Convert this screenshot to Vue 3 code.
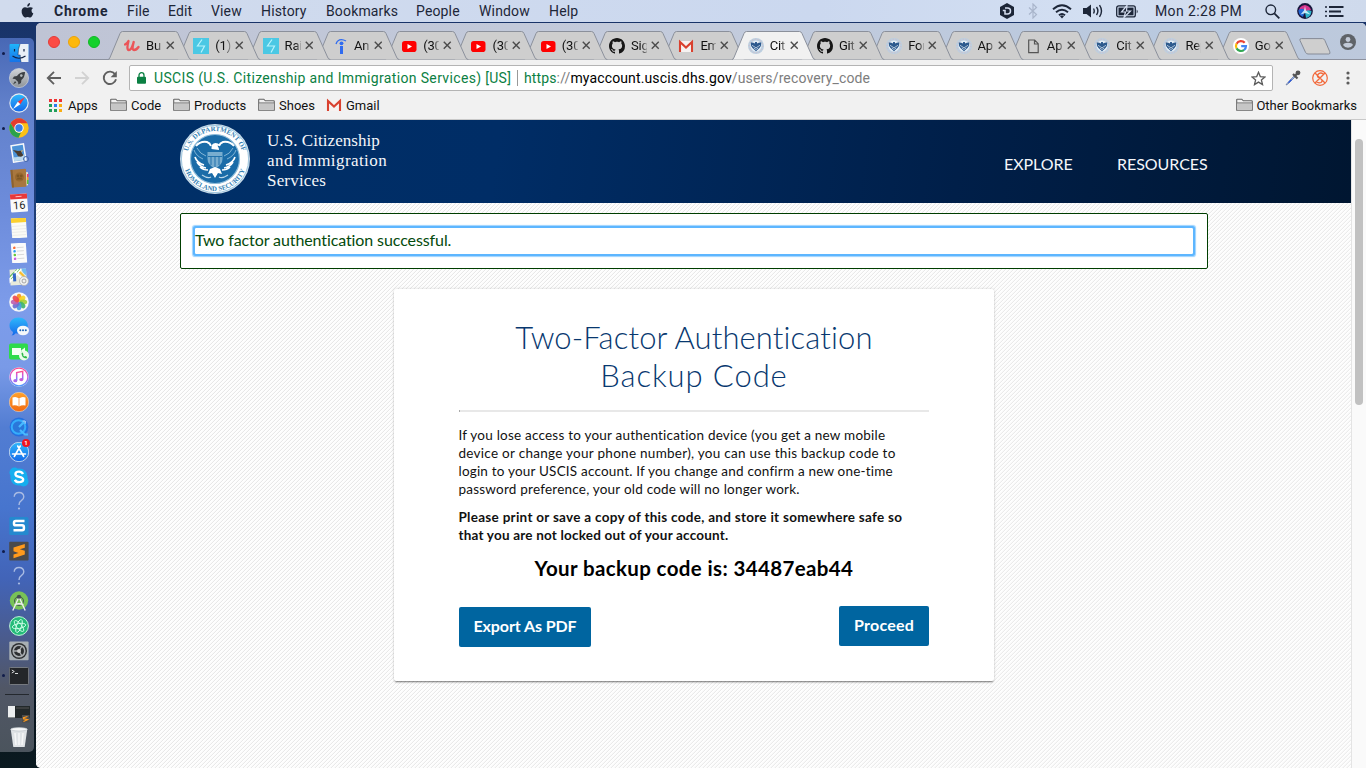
<script setup>
const menus = [
  { t: 'Chrome', w: 73 }, { t: 'File', w: 41 }, { t: 'Edit', w: 43 }, { t: 'View', w: 50 },
  { t: 'History', w: 65 }, { t: 'Bookmarks', w: 90 }, { t: 'People', w: 63 }, { t: 'Window', w: 70 }, { t: 'Help', w: 40 },
]
const tabs = [
  ['udemy', 'Bu'], ['bolt', '(1)'], ['bolt', 'Rai'], ['indeed', 'An'], ['youtube', '(30'], ['youtube', '(30'],
  ['youtube', '(30'], ['github', 'Sig'], ['gmail', 'Em'], ['eagle', 'Citi'], ['github', 'Git'], ['eagle', 'For'],
  ['eagle', 'Ap'], ['page', 'Ap'], ['eagle', 'Citi'], ['eagle', 'Rep'], ['google', 'Go'],
].map(([icon, text], i) => ({ icon, text, active: i === 9, z: i === 9 ? 40 : 30 - i }))
const dock = [
  'finder', 'rocket', 'safari', 'chrome', 'mail', 'contacts', 'calendar', 'notes', 'reminders', 'maps', 'photos',
  'messages', 'facetime', 'itunes', 'ibooks', 'quicktime', 'appstore', 'skype', 'question', 'snagit', 'sublime',
  'question', 'studio', 'atom', 'settings', 'terminal',
]
const running = ['finder', 'chrome', 'sublime', 'terminal']
const petals = [
  ['#f7931e', 0], ['#f9d423', 45], ['#a4cf3a', 90], ['#3fb56f', 135],
  ['#4a9fe0', 180], ['#6f6fd0', 225], ['#c062b0', 270], ['#ef4b50', 315],
]
</script>

<template>
  <div class="screen">
    <svg class="defs" width="0" height="0" aria-hidden="true">
      <defs>
        <linearGradient id="gFinder" x2="0" y2="1"><stop stop-color="#1fb4fb" /><stop offset="1" stop-color="#1673e8" /></linearGradient>
        <linearGradient id="gBlue" x2="0" y2="1"><stop stop-color="#2fb8fb" /><stop offset="1" stop-color="#1469ea" /></linearGradient>
        <linearGradient id="gSilver" x2="0" y2="1"><stop stop-color="#d2d5d8" /><stop offset="1" stop-color="#8e9499" /></linearGradient>
        <linearGradient id="gPink" x2="0" y2="1"><stop stop-color="#ff4f8e" /><stop offset=".5" stop-color="#c65be8" /><stop offset="1" stop-color="#4b9bff" /></linearGradient>
        <linearGradient id="gOrange" x2="0" y2="1"><stop stop-color="#ffa22b" /><stop offset="1" stop-color="#f26a12" /></linearGradient>
        <radialGradient id="gSiri"><stop stop-color="#e6f7ff" /><stop offset=".35" stop-color="#3fa9f5" /><stop offset=".65" stop-color="#6e2f9e" /><stop offset="1" stop-color="#18143c" /></radialGradient>
      </defs>

      <symbol id="udemy" viewBox="0 0 16 16"><path d="M1 6.500C3 5.500 4 4 4.500 3 3.500 7 2.500 12 5 12s3.700-4.500 4.700-8C8.700 8 7.700 12 10 12c2 0 3.500-1.500 4.500-3" fill="none" stroke="#eb5558" stroke-width="2.300" stroke-linecap="round" stroke-linejoin="round" /></symbol>
      <symbol id="bolt" viewBox="0 0 16 16"><path fill="#4bc8e4" d="M0 0h16v16H0z" /><path d="M9 1.500 4.500 8h7L8 14.500" fill="none" stroke="#b9f3fc" stroke-width="1.200" /></symbol>
      <symbol id="indeed" viewBox="0 0 16 16"><path d="M4 6c1-4 5-6 10-3" fill="none" stroke="#2f6bf0" stroke-width="1.300" /><circle cx="9.500" cy="5.300" r="1.900" fill="#2f6bf0" /><path d="M8 8h3v8H8z" fill="#2f6bf0" /></symbol>
      <symbol id="youtube" viewBox="0 0 16 16"><rect x="1" y="3" width="14.500" height="11" rx="2.800" fill="#f00" /><path d="m6.500 6 4.500 2.500-4.500 2.500z" fill="#fff" /></symbol>
      <symbol id="github" viewBox="0 0 16 16"><path fill="#161616" d="M8 0C3.580 0 0 3.580 0 8c0 3.540 2.290 6.530 5.470 7.590.4.070.550-.170.550-.380 0-.190-.010-.820-.010-1.490-2.010.370-2.530-.490-2.690-.940-.090-.230-.480-.940-.820-1.130-.280-.150-.680-.520-.010-.530.630-.010 1.080.580 1.230.820.720 1.210 1.870.870 2.330.660.070-.520.280-.870.510-1.070-1.780-.200-3.640-.890-3.640-3.950 0-.870.310-1.590.820-2.150-.080-.200-.360-1.020.080-2.120 0 0 .670-.210 2.200.820.640-.180 1.320-.270 2-.270s1.360.090 2 .270c1.530-1.040 2.200-.820 2.200-.820.440 1.100.160 1.920.080 2.120.510.560.820 1.270.820 2.150 0 3.070-1.870 3.750-3.650 3.950.290.250.540.730.540 1.480 0 1.070-.010 1.930-.010 2.200 0 .210.150.460.550.380A8.010 8.010 0 0 0 16 8c0-4.420-3.580-8-8-8" /></symbol>
      <symbol id="gmail" viewBox="0 0 16 16"><path fill="#f6f2f1" d="M1 3h14v11H1z" /><path d="M2 14V4l6 5.500L14 4v10" fill="none" stroke="#d9412f" stroke-width="2.100" /></symbol>
      <symbol id="eagle" viewBox="0 0 16 16"><circle cx="8" cy="8" r="8" fill="#bccfe0" /><circle cx="8" cy="8" r="6.700" fill="none" stroke="#e3b3ba" stroke-dasharray="1 2" stroke-width=".7" /><circle cx="8" cy="8" r="5.500" fill="#e4edf5" /><path fill="#2d5a8e" d="M2.800 4.500Q5 4 6.700 5.500L7.200 4h1.600l.5 1.500Q11 4 13.200 4.500 13.500 8 11.500 10L8 13.300 4.500 10Q2.500 8 2.800 4.500" /><path stroke="#c9d9e8" stroke-width=".8" fill="none" d="M4 7.300 8 9.800l4-2.500M5.800 10 8 11.500l2.200-1.500" /></symbol>
      <symbol id="page" viewBox="0 0 16 16"><path d="M3.700 2h6l3.500 3.700v9H3.700zM9.500 2v4h3.700" fill="none" stroke="#555" stroke-width="1.200" /></symbol>
      <symbol id="google" viewBox="0 0 16 16"><circle cx="8" cy="8" r="8" fill="#fff" /><g fill="none" stroke-width="2.200"><path d="M11.700 4.800A5 5 0 0 0 3.600 5.700" stroke="#ea4335" /><path d="M3.600 5.600a5 5 0 0 0 0 4.900" stroke="#fbbc05" /><path d="M3.600 10.400a5 5 0 0 0 7.500 1.500" stroke="#34a853" /><path d="M8.200 8.100h4.800a5 5 0 0 1-1.900 3.900" stroke="#4285f4" /></g></symbol>
      <symbol id="folder" viewBox="0 0 17 14"><path d="M.7 12.300V1.800q0-.6.600-.6h4.500l1.500 1.600h8.300q.7 0 .7.700v8.800z" fill="#f1f1f1" stroke="#666" stroke-width="1.100" /><path d="M1.300 5.300h14.400v6.500H1.300z" fill="#c6c6c6" /><path d="M1 4.900h15" stroke="#777" /></symbol>

      <symbol id="finder" viewBox="0 0 20 20"><rect x=".5" y="1" width="19" height="18" rx="1" fill="url(#gFinder)" /><path d="M11 1h8.500v18H12q-1-4-.8-7H9q0-6 2-11" fill="#e9eff7" /><path d="M5.500 6v2.500M15 6v2.500M3.500 13q6.500 4.500 13 0" stroke="#124" stroke-width="1.200" fill="none" /><path d="M11 1Q9 6 9 12h2.200q-.2 3 .8 7" fill="none" stroke="#124" stroke-width=".5" /></symbol>
      <symbol id="rocket" viewBox="0 0 20 20"><circle cx="10" cy="10" r="9.600" fill="url(#gSilver)" stroke="#dadde0" stroke-width=".6" /><path d="M16 4q-5-.2-8 4l-3 .4-1.500 2.400 2.600.2 3 3 .2 2.500L12 15l.4-3Q16 9 16 4M6 13l-2 3.500 3.300-2" fill="#3c4043" /><circle cx="12.300" cy="7.600" r="1.300" fill="#b5babd" /></symbol>
      <symbol id="safari" viewBox="0 0 20 20"><circle cx="10" cy="10" r="9.700" fill="#e8edf1" /><circle cx="10" cy="10" r="8.600" fill="url(#gBlue)" /><path d="m16 4-7.200 4.700 2.500 2.600z" fill="#f33" /><path d="m4 16 4.800-7.300 2.500 2.600z" fill="#fff" /></symbol>
      <symbol id="chrome" viewBox="0 0 20 20"><circle cx="10" cy="10" r="9.700" fill="#fbc116" /><path d="M1.600 5.200A9.700 9.700 0 0 1 18.400 5.200H10L6 12.300z" fill="#e33b2e" /><path d="M1.600 5.200 6 12.400q2 3.200 6 2l-2.500 5.300A9.700 9.700 0 0 1 1.600 5.200" fill="#2ba24c" /><circle cx="10" cy="10" r="4.700" fill="#fff" /><circle cx="10" cy="10" r="3.700" fill="#3a7fe8" /></symbol>
      <symbol id="mail" viewBox="0 0 20 20"><g transform="rotate(-9 10 10)"><path d="M2.500 1h14v18h-14z" fill="#f5f7fa" /><path d="M4 2.500h11v15H4z" fill="#4c92d7" /><path d="M4 13q5 2 11-1v5.500H4z" fill="#b9d8ee" /><path d="m4.500 6 5 2 4.500 0-1.500 2 1.500 3-2.500 1-3-1-1-3z" fill="#4a3b2d" /><path d="m12 8 2.500 0-1.500 1.500z" fill="#f4d896" /></g><circle cx="17" cy="16" r="2.500" fill="none" stroke="#4668aa" stroke-width="1" /></symbol>
      <symbol id="contacts" viewBox="0 0 20 20"><path d="m16 4 3 .3v13l-3 .5z" fill="#e9e3d2" /><path d="M18 6h1.500v3H18z" fill="#f36" /><path d="M18 9h1.500v3H18z" fill="#f9a21b" /><path d="M18 12h1.500v4H18z" fill="#5bc236" /><path d="M1.500 2 16 .8q1 0 1 1l.5 16q0 1-1 1L3 19.500z" fill="#a8773f" /><path d="m1.500 2 2-.2L5 19.400l-2 .1z" fill="#8d6230" /><circle cx="10.500" cy="9" r="4.500" fill="#99692f" /><circle cx="9" cy="8" r="1.400" fill="#7d5624" /><circle cx="12.300" cy="8" r="1.400" fill="#7d5624" /><path d="M7 11.500q3.500-4 7 0" fill="#7d5624" /></symbol>
      <symbol id="calendar" viewBox="0 0 20 20"><g transform="rotate(-4 10 10)"><rect x="1.500" y="1" width="17" height="18" rx="1" fill="#fafafa" /><path d="M1.500 1h17v5h-17z" fill="#e8383b" /><path d="M7 3.500h6" stroke="#fbb" stroke-width="1" /><text x="10" y="16" text-anchor="middle" font-family="Roboto, sans-serif" font-size="11" fill="#222">16</text></g></symbol>
      <symbol id="notes" viewBox="0 0 20 20"><g transform="rotate(-4 10 10)"><path d="M2.500 0h15v20h-15z" fill="#fbfaf5" /><path d="M2.500 0h15v4.500h-15z" fill="#fcd02f" /><path d="M3 8h14M3 11h14M3 14h14M3 17h14" stroke="#dedede" stroke-width=".5" /></g></symbol>
      <symbol id="reminders" viewBox="0 0 20 20"><g transform="rotate(-4 10 10)"><path d="M2.500 0h15v20h-15z" fill="#fbfbfb" /><circle cx="5.700" cy="4.500" r="1.300" fill="#f96b36" /><circle cx="5.700" cy="8" r="1.300" fill="#2d9cf1" /><circle cx="5.700" cy="11.700" r="1.300" fill="#65c937" /><circle cx="5.700" cy="15.500" r="1.300" fill="#d15be0" /><path d="M8 4.500h7M8 8h7M8 11.700h7M8 15.500h7" stroke="#ccc" stroke-width=".7" /></g></symbol>
      <symbol id="maps" viewBox="0 0 20 20"><g transform="rotate(-4 10 10)"><path d="M1 2h16.500v16H1z" fill="#e8eadb" /><path d="M1 8 8 2h5L1 13z" fill="#5fbf50" /><path d="M10 2 1 11v3L13 2M6 4l11 12" stroke="#fff" stroke-width="1.500" fill="none" /><path d="M13 2h4.500v7q-4-3-4.500-7" fill="#72bdf0" /><path d="M4 6h3v8H4z" fill="#3267c8" /><path d="m11 5 6 7" stroke="#f9bd2d" stroke-width="2" /></g><circle cx="15" cy="14" r="4.500" fill="#eef0f0" stroke="#aaa" stroke-width=".7" /><circle cx="15" cy="14" r="2" fill="none" stroke="#888" stroke-width=".7" /></symbol>
      <symbol id="photos" viewBox="0 0 20 20"><circle cx="10" cy="10" r="9.800" fill="#f7f7f7" /><ellipse v-for="p in petals" :key="p[1]" cx="10" cy="5.700" rx="2.500" ry="3.900" :fill="p[0]" fill-opacity=".92" :transform="`rotate(${p[1]} 10 10)`" /></symbol>
      <symbol id="messages" viewBox="0 0 20 20"><path d="M9.500.5c5 0 9.300 3.500 9.300 8s-4.300 8-9.300 8q-1.500 0-2.800-.3Q5 18.500 2.500 18.500q1.700-1.500 1.500-3.500-3.500-2.500-3.500-6.500C.5 4 4.500.5 9.500.5" fill="url(#gBlue)" /><ellipse cx="14" cy="13.500" rx="6" ry="4.800" fill="#f5f8fa" /><g fill="#1b63b5"><circle cx="11.300" cy="13.300" r="1" /><circle cx="14" cy="13.300" r="1" /><circle cx="16.800" cy="13.300" r="1" /></g></symbol>
      <symbol id="facetime" viewBox="0 0 20 20"><rect x="0" y="1.500" width="19" height="16" rx="2" fill="#2edb4b" /><path d="M3 6h9v7H3zM12 8.500 16 5.500v6z" fill="#f4fff4" /><circle cx="15" cy="13.500" r="5" fill="#eafbea" /><path d="M12.500 11q0 5 5 5.500l.8-1.500-2-1-1 .5-1.200-1.200.4-1-1-1.800z" fill="#2cb947" /></symbol>
      <symbol id="itunes" viewBox="0 0 20 20"><circle cx="10" cy="10" r="9.800" fill="#eee" /><circle cx="10" cy="10" r="8.900" fill="#fff" stroke="url(#gPink)" stroke-width="1.300" /><path d="M7.700 13.500v-8l6-1.200v8" fill="none" stroke="url(#gPink)" stroke-width="1.500" /><ellipse cx="6.300" cy="13.700" rx="2" ry="1.600" fill="#a96bec" /><ellipse cx="12.300" cy="12.600" rx="2" ry="1.600" fill="#c65bd8" /></symbol>
      <symbol id="ibooks" viewBox="0 0 20 20"><circle cx="10" cy="10" r="9.700" fill="url(#gOrange)" stroke="#f4d8bb" stroke-width=".6" /><path d="M10 6.500Q7 4 3.500 5.500v8Q7 12.500 10 14.500q3-2 6.500-1v-8Q13 4 10 6.500" fill="#fff" /><path d="M10 6.500v8" stroke="#f08020" stroke-width=".7" /></symbol>
      <symbol id="quicktime" viewBox="0 0 20 20"><circle cx="10" cy="10" r="9.400" fill="#246fdf" /><circle cx="9.500" cy="10" r="6.800" fill="#2a77da" stroke="#35adfb" stroke-width="2" /><path d="m10 10 5-5M11 13l5 4.500h3" stroke="#48b9ff" stroke-width="2.200" fill="none" /><path d="M13.500 4h2.700v2.700" stroke="#bfe6ff" fill="none" /></symbol>
      <symbol id="appstore" viewBox="0 0 20 20"><circle cx="10" cy="10" r="9.700" fill="url(#gBlue)" stroke="#d9e6f1" stroke-width=".8" /><path d="m11.300 4-6 10.500M8.700 4l6 10.500M3.500 12h13" stroke="#fff" stroke-width="1.600" stroke-linecap="round" /></symbol>
      <symbol id="skype" viewBox="0 0 20 20"><rect x="1.500" y="1.500" width="17" height="17" rx="8" fill="#14aeef" /><circle cx="5.500" cy="5.500" r="5" fill="#14aeef" /><circle cx="14.500" cy="14.500" r="5" fill="#14aeef" /><path d="M14 7q-1-2.300-4-2.300-3.600 0-3.600 2.500 0 2 3.800 2.600 4 .7 4 2.800 0 2.600-4 2.600-3.300 0-4.300-2.500" stroke="#fff" stroke-width="2.300" fill="none" /></symbol>
      <symbol id="question" viewBox="0 0 20 20"><path d="M5.200 5.800q.3-4.300 4.800-4.300t4.800 4.200q0 2.400-2.500 4Q10 11 10 14" fill="none" stroke="#a9bbe3" stroke-width="1.400" /><circle cx="10" cy="17.500" r="1.100" fill="#a9bbe3" /></symbol>
      <symbol id="snagit" viewBox="0 0 20 20"><rect x=".3" y="1" width="19.200" height="18" rx="1.500" fill="#2489cf" /><path d="M15.500 5H6.700Q5 5 5 6.700v1q0 1.600 1.700 1.600h6.500q1.700 0 1.700 1.700v1.600q0 1.700-1.700 1.700H4.500" fill="none" stroke="#fff" stroke-width="2.500" /></symbol>
      <symbol id="sublime" viewBox="0 0 20 20"><rect x=".2" y=".7" width="19.400" height="18.800" rx="1" fill="#4a4a4b" /><path d="M15.800 3 4.500 6.500v3.700l5 1.700-5 1.600v3.700l11.300-3.700V9.800l-5-1.600 5-1.500z" fill="#ff9a1c" /></symbol>
      <symbol id="studio" viewBox="0 0 20 20"><circle cx="10" cy="9.500" r="9.200" fill="#78c257" /><circle cx="10" cy="10" r="4.500" fill="none" stroke="#455" stroke-width="1" /><circle cx="10" cy="6" r="2.200" fill="#435055" /><path d="m9.300 7.500-5.500 12M10.700 7.500l5.500 12M5.500 14q4.500-2.500 9 0" fill="none" stroke="#eee" stroke-width="1.400" /></symbol>
      <symbol id="atom" viewBox="0 0 20 20"><circle cx="10" cy="10" r="9.400" fill="#24bb79" stroke="#bff5da" stroke-width="1" /><g fill="none" stroke="#d4ffec" stroke-width=".9"><ellipse cx="10" cy="10" rx="2.500" ry="6.800" transform="rotate(20 10 10)" /><ellipse cx="10" cy="10" rx="2.500" ry="6.800" transform="rotate(80 10 10)" /><ellipse cx="10" cy="10" rx="2.500" ry="6.800" transform="rotate(140 10 10)" /></g></symbol>
      <symbol id="settings" viewBox="0 0 20 20"><rect x=".3" y=".5" width="19.300" height="18.800" rx="1" fill="#a8afb4" /><circle cx="10" cy="10" r="8" fill="#2d2f31" /><circle cx="10" cy="10" r="5.800" fill="none" stroke="#a9adb0" stroke-width="1.600" /><path d="M10 10H4.500M10 10l3-5M10 10l3 5" stroke="#a9adb0" stroke-width="1.400" /><circle cx="10" cy="10" r="2" fill="#ccc" /></symbol>
      <symbol id="terminal" viewBox="0 0 20 20"><rect x=".3" y="1.500" width="19.300" height="17" rx="1" fill="#242629" stroke="#85898e" stroke-width=".8" /><path d="m2.800 4 2.500 1.500L2.800 7M6 7.500h3" fill="none" stroke="#eee" stroke-width=".9" /></symbol>
    </svg>

    <header class="menubar">
      <svg class="apple" viewBox="0 0 14 16"><path d="M9.700 0q.1 1.700-.9 2.800Q7.900 3.800 6.700 3.700q-.1-1.500.9-2.600Q8.500.1 9.700 0M12.900 5.400q-1.700 1-1.600 2.900.1 2.200 2 3-.5 1.500-1.500 2.900-1 1.400-2 1.400-.7 0-1.400-.4-1.300-.5-2.600 0-.7.400-1.300.4-1.200 0-2.600-2.300Q.3 10.500.7 8 1.300 4.700 4.300 4.500q.8 0 1.600.4 1.100.4 2.100 0 1-.4 2-.4 1.900.1 2.900.9" fill="#1d2638" /></svg>
      <nav class="menus"><span v-for="(m, i) in menus" :key="m.t" :class="{ bold: i === 0 }" :style="{ width: m.w + 'px' }">{{ m.t }}</span></nav>
      <div class="status">
        <svg class="s-hex" viewBox="0 0 14 16"><path d="M7 0 14 4v8l-7 4-7-4V4z" fill="#1c2537" /><path d="M5 5h2.500a3 3 0 0 1 0 6H5V7.500M2.800 7.500h3" fill="none" stroke="#d5def0" stroke-width="1.500" /></svg>
        <svg class="s-bt" viewBox="0 0 10 16"><path d="m1 4.500 7.500 7L5 15V1l3.500 3.500-7.500 7" fill="none" stroke="#a9b5cb" stroke-width="1.200" /></svg>
        <svg class="s-wifi" viewBox="0 0 20 15"><g fill="none" stroke="#1d2638" stroke-width="1.900"><path d="M1 5.200q9-8 18 0M4 8.300q6-5.200 12 0M7 11.300q3-2.600 6 0" /></g><path d="m8 12.300 2-1 2 1-2 2.300z" fill="#1d2638" /></svg>
        <svg class="s-vol" viewBox="0 0 21 16"><path d="M0 5h3.500L8 1.500v13L3.500 11H0z" fill="#1d2638" /><path d="M10.500 5.500q1.500 2.500 0 5M13.500 4q2.800 4 0 8M16.500 2.200q4 5.800 0 11.600" fill="none" stroke="#1d2638" stroke-width="1.400" /></svg>
        <svg class="s-bat" viewBox="0 0 23 13"><rect x=".7" y=".9" width="18.600" height="11" rx="2" fill="none" stroke="#1d2638" stroke-width="1.300" /><path d="M2.500 2.600h15v7.700h-15z" fill="#1d2638" /><path d="M20.700 4.500q2 2 0 4z" fill="#1d2638" /><path d="M11 .5 5.500 7h4L8 12.500 14.500 6h-4z" fill="#1d2638" stroke="#d5def0" stroke-width="1.200" /></svg>
        <span class="clock">Mon 2:28 PM</span>
        <svg class="s-find" viewBox="0 0 15 15"><circle cx="5.800" cy="5.800" r="4.800" fill="none" stroke="#1d2638" stroke-width="1.400" /><path d="m9.300 9.300 5 5" stroke="#1d2638" stroke-width="1.800" /></svg>
        <svg class="s-siri" viewBox="0 0 16 16"><circle cx="8" cy="8" r="7.900" fill="#17163c" /><path d="M2 8q0-5 6-6 5 1 6 5l-6 2z" fill="#d6338e" /><path d="M1.500 7q5-3 6.500 1l-2 6Q1 12 1.500 7" fill="#2468d8" /><path d="M14.500 8q-5-2-6.500 1l1 6q5-1 5.500-7" fill="#2fb3c9" /><path d="m8 3 1 4.500 4.500 4-5-1.500-5 1.500 3.500-4z" fill="#dffaff" opacity=".85" /></svg>
        <svg class="s-list" viewBox="0 0 19 13"><path d="M0 2h2M0 6.500h2M0 11h2" stroke="#1d2638" stroke-width="1.600" /><path d="M4 2h14.500M4 6.500h12M4 11h14.500" stroke="#1d2638" stroke-width="1.900" /></svg>
      </div>
    </header>

    <div class="desktop">
      <aside class="dock">
        <div v-for="(d, i) in dock" :key="i" class="dock-item">
          <i v-if="running.includes(d)" class="dot"></i>
          <svg class="dock-icon"><use :href="'#' + d" /></svg>
          <b v-if="d === 'appstore'" class="badge">1</b>
        </div>
        <hr class="dock-line" />
        <svg class="minimized" viewBox="0 0 22 17"><path d="M0 0h22v12H0z" fill="#22282a" /><path d="M0 0h7v11.500H0z" fill="#eceeef" /><path d="M8 2h13" stroke="#555" /><rect x="14" y="9" width="7.500" height="7.500" fill="#4d4d4d" /><path d="m19.500 10.500-4 1.200v1l4 1-4 1.800" fill="none" stroke="#ff9a1c" stroke-width="1.200" /></svg>
        <svg class="trash" viewBox="0 0 18 21"><path d="M.7 2h16.600L14.700 20H3.300z" fill="#dfe3e6" /><ellipse cx="9" cy="2.300" rx="8.300" ry="1.700" fill="#f7f8f9" stroke="#b7bec4" stroke-width=".6" /><path d="m5 6 1 12M9 6v12M13 6l-1 12" stroke="#f5f6f7" stroke-width="1.500" /></svg>
      </aside>

      <section class="window">
        <div class="strip">
          <div class="lights"><i class="red"></i><i class="yellow"></i><i class="green"></i></div>
          <div class="tabs">
            <div v-for="(t, i) in tabs" :key="i" class="tab" :class="{ active: t.active }" :style="{ zIndex: t.z }">
              <svg class="shape" viewBox="0 0 84 29"><path d="M0 28.500Q1.500 28.500 2.200 26L12 2.500Q12.800.5 14.500.5h53q1.700 0 2.500 2L80.500 26q.8 2.500 2.800 2.500" /></svg>
              <svg class="fav"><use :href="'#' + t.icon" /></svg>
              <span class="label">{{ t.text }}</span>
              <svg class="close" viewBox="0 0 9 9"><path d="m.8.8 7.400 7.400M8.200.8.800 8.200" stroke="#4c4c4c" stroke-width="1.500" /></svg>
            </div>
          </div>
          <svg class="newtab" viewBox="0 0 32 17"><path d="M1 2.500Q.2.600 2.500.600h21q1.500 0 2.300 1.700l5 11.500q.8 2.200-1 2.200H9q-1.700 0-2.500-1.700z" fill="#cfcfcf" stroke="#858b97" /></svg>
          <svg class="profile" viewBox="0 0 16 16"><circle cx="8" cy="8" r="8" fill="#5f6368" /><circle cx="8" cy="5.500" r="2.400" fill="#c2cad8" /><path d="M3 11q1-2.200 5-2.200T13 11q-1.700 2.700-5 2.700T3 11" fill="#c2cad8" /></svg>
        </div>

        <div class="toolbar">
          <svg class="nav" viewBox="0 0 16 16"><path d="M15 8H2M8 1.800 1.800 8 8 14.200" fill="none" stroke="#606060" stroke-width="1.900" /></svg>
          <svg class="nav" viewBox="0 0 16 16"><path d="M1 8h13M8 1.800 14.200 8 8 14.200" fill="none" stroke="#d2d2d2" stroke-width="1.900" /></svg>
          <svg class="nav" viewBox="0 0 16 16"><path d="M13.200 4.500A6.200 6.200 0 1 0 14 9.300" fill="none" stroke="#606060" stroke-width="1.900" /><path d="M14.800 1v6.200H8.600z" fill="#606060" /></svg>
          <div class="omnibox">
            <svg class="lock" viewBox="0 0 9 12"><rect y="4.800" width="9" height="7" rx="1" fill="#0b8043" /><path d="M2 5V3.200a2.500 2.500 0 0 1 5 0V5" fill="none" stroke="#0b8043" stroke-width="1.300" /></svg>
            <span class="cert">USCIS (U.S. Citizenship and Immigration Services) [US]</span>
            <span class="url"><em>https</em><s>://</s>myaccount.uscis.dhs.gov<s>/users/recovery_code</s></span>
            <svg class="star" viewBox="0 0 15 15"><path d="m7.500 1.300 1.800 4.300 4.600.4-3.500 3 1.100 4.600-4-2.500-4 2.500L4.600 9 1.100 6l4.600-.4z" fill="none" stroke="#5c5c5c" stroke-width="1.300" /></svg>
          </div>
          <svg class="ext" viewBox="0 0 16 16"><path d="m9 6-7 7.500L1 15l1.700-.8L10 7" fill="#9db9f0" stroke="#7585a8" stroke-width=".9" /><path d="m3 12.500 3-3.200 1 .8-3 3z" fill="#2455dc" /><path d="m8 4 4.500 4.500M10 6l3-3.500" stroke="#555" stroke-width="2.200" /><circle cx="13" cy="2.800" r="2.400" fill="#555" /></svg>
          <svg class="ext orange" viewBox="0 0 16 16"><g fill="none" stroke="#f2683a"><circle cx="8" cy="8" r="7.300" stroke-width="1.200" /><path d="M11.500 4Q8 1.800 6 4.500T9 9q2 1.500 0 3.500-2 1-4.500-.8M3 3l10 10M3 13 13 3" stroke-width="1.300" /></g></svg>
          <svg class="dots" viewBox="0 0 4 14"><g fill="#5c5c5c"><circle cx="2" cy="2" r="1.600" /><circle cx="2" cy="7" r="1.600" /><circle cx="2" cy="12" r="1.600" /></g></svg>
        </div>

        <div class="bookmarks">
          <svg class="apps" viewBox="0 0 13 13"><path fill="#e33" d="M0 0h3v3H0zM5 0h3v3H5zM10 0h3v3h-3z" /><path fill="#1e9e5a" d="M0 5h3v3H0zM0 10h3v3H0z" /><path fill="#2c7bf0" d="M5 5h3v3H5z" /><path fill="#f9ae13" d="M10 5h3v3h-3zM10 10h3v3h-3z" /><path fill="#1e9e5a" d="M5 10h3v3H5z" /></svg>
          <span class="bm b1">Apps</span>
          <svg class="folder"><use href="#folder" /></svg><span class="bm b2">Code</span>
          <svg class="folder"><use href="#folder" /></svg><span class="bm b3">Products</span>
          <svg class="folder"><use href="#folder" /></svg><span class="bm b4">Shoes</span>
          <svg class="gm"><use href="#gmail" /></svg><span class="bm">Gmail</span>
          <svg class="folder last"><use href="#folder" /></svg><span class="bm other">Other Bookmarks</span>
        </div>

        <div class="viewport">
          <main class="page">
            <div class="banner">
              <svg class="seal" viewBox="0 0 70 70">
                <defs><path id="arcTop" d="M9.500 47A28.100 28.100 0 1 1 60.500 47" /><path id="arcBottom" d="M3 35A32 32 0 0 0 67 35" /></defs>
                <circle cx="35" cy="35" r="35" fill="#cfe0ec" /><circle cx="35" cy="35" r="33.600" fill="#fff" stroke="#8dbbd8" stroke-width=".8" />
                <circle cx="35" cy="35" r="24.500" fill="#1a6ca8" stroke="#8dbbd8" stroke-width="1.200" />
                <text class="ring"><textPath href="#arcTop" startOffset="50%" text-anchor="middle">U.S. DEPARTMENT OF</textPath></text>
                <text class="ring"><textPath href="#arcBottom" startOffset="50%" text-anchor="middle">HOMELAND SECURITY</textPath></text>
                <path d="M16 22q4-5 11-4 3 1 4 4M54 22q-4-5-11-4-3 1-4 4" fill="none" stroke="#fff" stroke-width="2" />
                <path d="M14 26q2 6 9 9M56 26q-2 6-9 9M17 24q3 6 9 8M53 24q-3 6-9 8" fill="none" stroke="#8fbcda" stroke-width=".9" />
                <path fill="#fff" d="M31.500 25q-.5-6 4-6 2.500 0 4.500 2l-2.500.7q1.500 2 1.500 4.300z" />
                <path fill="#78adcf" d="M27.500 28h15v7q0 6-7.500 9.500-7.500-3.500-7.500-9.500z" /><path d="M28 32.500h14M31 32.500V41M35 32.500V43M39 32.500V41" stroke="#1a6ca8" stroke-width=".9" />
                <path d="M15 33q2 6 9 8M17 38q3 5 9 6M20 43q3 3 8 3M55 33q-2 6-9 8M53 38q-3 5-9 6M50 43q-3 3-8 3" fill="none" stroke="#fff" stroke-width="1.700" />
                <path fill="#fff" d="m30 45 5-2 5 2 2 5-4-1-3 5-3-5-4 1z" />
                <path d="M22 51q6 4 9 2M48 51q-6 4-9 2" fill="none" stroke="#b9d5e7" stroke-width="1.200" />
              </svg>
              <div class="agency"><span class="a1">U.S. Citizenship</span><br /><span class="a2">and Immigration</span><br /><span class="a3">Services</span></div>
              <nav class="links"><a class="l1">EXPLORE</a><a class="l2">RESOURCES</a></nav>
            </div>

            <div class="alert"><div class="focus">Two factor authentication successful.</div></div>

            <article class="card">
              <h1><span class="t1">Two-Factor Authentication</span><br /><span class="t2">Backup Code</span></h1>
              <hr class="rule" />
              <p>
                If you lose access to your authentication device (you get a new mobile<br />
                <span class="p2">device or change your phone number), you can use this backup code to</span><br />
                <span class="p3">login to your USCIS account. If you change and confirm a new one-time</span><br />
                password preference, your old code will no longer work.
              </p>
              <p class="strong">Please print or save a copy of this code, and store it somewhere safe so<br /><span class="p3">that you are not locked out of your account.</span></p>
              <h2>Your backup code is: 34487eab44</h2>
              <div class="actions"><button class="export">Export As PDF</button><button class="proceed">Proceed</button></div>
            </article>
          </main>
          <div class="scroll"><div class="thumb"></div></div>
        </div>
      </section>
    </div>
  </div>
</template>

<style>
body { margin: 0; overflow: hidden; }
</style>

<style scoped>
* { box-sizing: border-box; }
svg { display: block; flex: none; }
.defs { position: absolute; }
.screen { width: 1366px; height: 768px; overflow: hidden; font-family: Roboto, "Liberation Sans", sans-serif; display: flex; flex-direction: column; background: linear-gradient(#173166 0, #1d3c75 120px, #25437c 380px, #102653 480px, #09151f 720px, #0b1a20 768px); }
.menubar { height: 22px; flex: none; display: flex; align-items: center; background: linear-gradient(90deg, #d1dbed, #cbd8ef 60%, #d3dff2 80%, #cfdaec); color: #1d2638; font-size: 14px; }
.apple { width: 13px; height: 15px; margin-left: 21px; margin-top: -2px; }
.menus { display: flex; margin-left: 20px; line-height: 22px; letter-spacing: .15px; }
.menus span { white-space: nowrap; }
.menus .bold { font-weight: 700; letter-spacing: .8px; }
.status { margin-left: auto; display: flex; align-items: center; padding-right: 22px; }
.s-hex { width: 14px; height: 16px; }
.s-bt { width: 10px; height: 16px; margin-left: 14px; }
.s-wifi { width: 20px; height: 15px; margin-left: 14px; }
.s-vol { width: 21px; height: 16px; margin-left: 11px; }
.s-bat { width: 23px; height: 13px; margin-left: 12px; }
.clock { width: 87px; margin-left: 16px; white-space: nowrap; letter-spacing: .38px; }
.s-find { width: 15px; height: 15px; margin-left: 23px; margin-top: 1px; }
.s-siri { width: 16px; height: 16px; margin-left: 17px; }
.s-list { width: 19px; height: 13px; margin-left: 12px; }

.desktop { flex: 1; display: flex; padding-top: 1px; min-height: 0; }
.dock { width: 34px; height: 714px; margin-top: 15px; margin-right: 2px; flex: none; padding-top: 3px; border-radius: 0 5px 5px 0; display: flex; flex-direction: column; background: linear-gradient(#4868b5 0, #6281cb 70px, #6d8cdb 170px, #7d9cea 270px, #799ae7 330px, #527dd2 390px, #4775ce 470px, #4264b8 540px, #4a5b8d 600px, #515766 650px, #4b545d 714px); }
.dock-item { height: 24.900px; position: relative; display: flex; align-items: center; padding-left: 8.500px; flex: none; }
.dock-icon { width: 20px; height: 20px; }
.dot { position: absolute; left: 2px; top: 11px; width: 3px; height: 3px; border-radius: 50%; background: #101c4a; }
.badge { position: absolute; left: 22px; top: 0; width: 8px; height: 8px; border-radius: 50%; background: #f01420; color: #fff; font-size: 6px; line-height: 8px; text-align: center; }
.dock-line { width: 24px; height: 1px; border: 0; background: #24282e; margin: 6px 0 0 5px; flex: none; }
.minimized { width: 22px; height: 17px; margin: 11px 0 0 7.500px; }
.trash { width: 18px; height: 21px; margin: 4px 0 0 9.500px; }

.window { flex: 1; min-width: 0; display: flex; flex-direction: column; border-radius: 5px 5px 0 5px; overflow: hidden; background: #f1f1f1; }
.strip { height: 37px; flex: none; display: flex; position: relative; background: linear-gradient(90deg, #bfc4d5, #c3cbdc 50%, #b9c9df 85%, #bdc9dc); border-bottom: 1px solid #8d929f; }
.lights { display: flex; gap: 8px; padding: 13px 0 0 12px; width: 72px; flex: none; }
.lights i { width: 12px; height: 12px; border-radius: 50%; }
.red { background: #fc4b45; border: 1px solid #e33c38; }
.yellow { background: #fdb80d; border: 1px solid #eca30a; }
.green { background: #14d12c; border: 1px solid #10b925; }
.tabs { display: flex; padding-top: 8px; height: 37px; }
.tab { width: 69.300px; height: 29px; flex: none; position: relative; display: flex; align-items: center; }
.shape { position: absolute; left: 0; top: 0; width: 84px; height: 29px; }
.shape path { fill: #cecece; stroke: #8b909b; }
.active .shape path { fill: #f1f1f1; }
.fav, .label, .close { position: relative; }
.fav { width: 16px; height: 16px; margin-left: 16px; }
.label { width: 16px; margin-left: 6px; overflow: hidden; white-space: nowrap; font-size: 13px; line-height: 20px; letter-spacing: -.2px; color: #111; -webkit-mask-image: linear-gradient(90deg, #000 65%, rgba(0, 0, 0, .2)); }
.close { width: 8.500px; height: 8.500px; margin-left: 4px; flex: none; }
.newtab { width: 32px; height: 17px; margin: 15px 0 0 13px; }
.profile { width: 16px; height: 16px; margin: 11px 0 0 9px; }
.toolbar { height: 36px; flex: none; display: flex; align-items: center; padding-left: 10px; }
.nav { width: 16px; height: 16px; margin-right: 12px; }
.omnibox { width: 1144px; height: 26px; margin-left: -1px; background: #fff; border: 1px solid #b4b4b4; border-radius: 2px; display: flex; align-items: center; font-size: 14px; white-space: nowrap; color: #000; }
.lock { width: 9px; height: 12px; margin: -1px 8px 0 7px; }
.cert { color: #0b8043; width: 364px; height: 16px; line-height: 16px; border-right: 1px solid #999; letter-spacing: .345px; }
.url { margin-left: 6px; letter-spacing: .13px; }
.url em { color: #0b8043; font-style: normal; }
.url s { color: #7d7d7d; text-decoration: none; }
.star { width: 15px; height: 15px; margin: 0 6px 0 auto; }
.ext { width: 16px; height: 16px; margin-left: 12px; }
.orange { margin-left: 11px; }
.dots { width: 4px; height: 14px; margin-left: 18px; }
.bookmarks { height: 24px; flex: none; display: flex; align-items: center; padding: 0 9px 5px 13px; font-size: 13px; letter-spacing: 0; color: #111; border-bottom: 1px solid #c9c9c9; }
.bm { white-space: nowrap; margin-left: 4px; }
.other { margin-left: 3px; }
.apps { width: 13px; height: 13px; margin-right: 2px; }
.b1 { width: 42px; }
.b2 { width: 42px; }
.b3 { width: 64px; }
.b4 { width: 47px; }
.folder { width: 17px; height: 14px; }
.gm { width: 16px; height: 16px; }
.last { margin-left: auto; }

.viewport { flex: 1; display: flex; min-height: 0; font-family: Lato, "Open Sans", sans-serif; }
.page { width: 1315px; background: repeating-linear-gradient(135deg, #fff 0, #fbfbfb 1.500px, #e5e5e5 2.100px, #fff 2.828px); }
.banner { height: 83px; display: flex; padding: 4px 143px 0 144px; background: linear-gradient(97deg, #003068 0, #002d66 35%, #001f49 70%, #001631 100%); }
.seal { width: 70px; height: 70px; }
.ring { font-family: "Liberation Serif", serif; font-weight: 700; font-size: 6.800px; fill: #347fb3; }
.agency { margin: 7px 0 0 17px; font: 17px/20px "Liberation Serif", serif; color: #f4f6fa; white-space: nowrap; }
.a1 { letter-spacing: .06px; }
.a2 { letter-spacing: .42px; }
.a3 { letter-spacing: .18px; }
.links { display: flex; margin-left: auto; padding-top: 30px; color: #f4f6fa; font-size: 16px; line-height: 20px; white-space: nowrap; letter-spacing: -.05px; }
.l1 { width: 113px; }
.l2 { width: 91px; }
.alert { width: 1028px; height: 56px; margin: 10px 0 0 144px; border: 1px solid #003e00; border-radius: 2px; background: #fff; padding: 14px 14px 0; }
.focus { height: 26px; line-height: 24px; font-size: 16px; color: #044a0c; white-space: nowrap; padding-left: 0; letter-spacing: -.1px; border-radius: 1px; box-shadow: 0 0 0 2px #5db6ff, 0 0 1px 3px #9dd3ff; }
.card { width: 600px; height: 392px; margin: 20px 0 0 358px; padding: 29px 65px 0; background: #fff; border-radius: 2px; box-shadow: 0 2px 2px -1px rgba(0, 0, 0, .5), 0 0 3px rgba(0, 0, 0, .16); color: #111; }
h1 { margin: 0; text-align: center; font-weight: 300; font-size: 31px; line-height: 38px; color: #08386f; white-space: nowrap; }
.t1 { letter-spacing: .12px; }
.t2 { letter-spacing: .9px; }
.rule { margin: 16px 0 0; border: 0; height: 2px; background: #e8e8e8; border-left: 1px solid #aaa; }
p { margin: 14px 0 0; font-size: 13.500px; line-height: 18px; white-space: nowrap; letter-spacing: .22px; margin-left: -.5px; }
.p2 { letter-spacing: .28px; }
.p3 { letter-spacing: .2px; }
.strong { margin-top: 10px; font-weight: 700; letter-spacing: .28px; }
h2 { margin: 10px 0 0; font-size: 20.500px; line-height: 28px; text-align: center; font-weight: 700; letter-spacing: .37px; color: #000; white-space: nowrap; }
.actions { display: flex; justify-content: space-between; margin-top: 24px; }
button { height: 40px; border: 0; border-radius: 2px; background: #0065a0; color: #fff; font: 700 16px Lato, sans-serif; padding: 0 0 3px; white-space: nowrap; }
.export { width: 132px; margin-top: 1px; letter-spacing: -.08px; }
.proceed { width: 90px; letter-spacing: .2px; }
.scroll { width: 15px; background: #fafafa; border-left: 1px solid #e4e4e4; padding: 19px 0 0 3px; }
.thumb { width: 8px; height: 266px; border-radius: 4px; background: #c1c1c1; }
</style>
